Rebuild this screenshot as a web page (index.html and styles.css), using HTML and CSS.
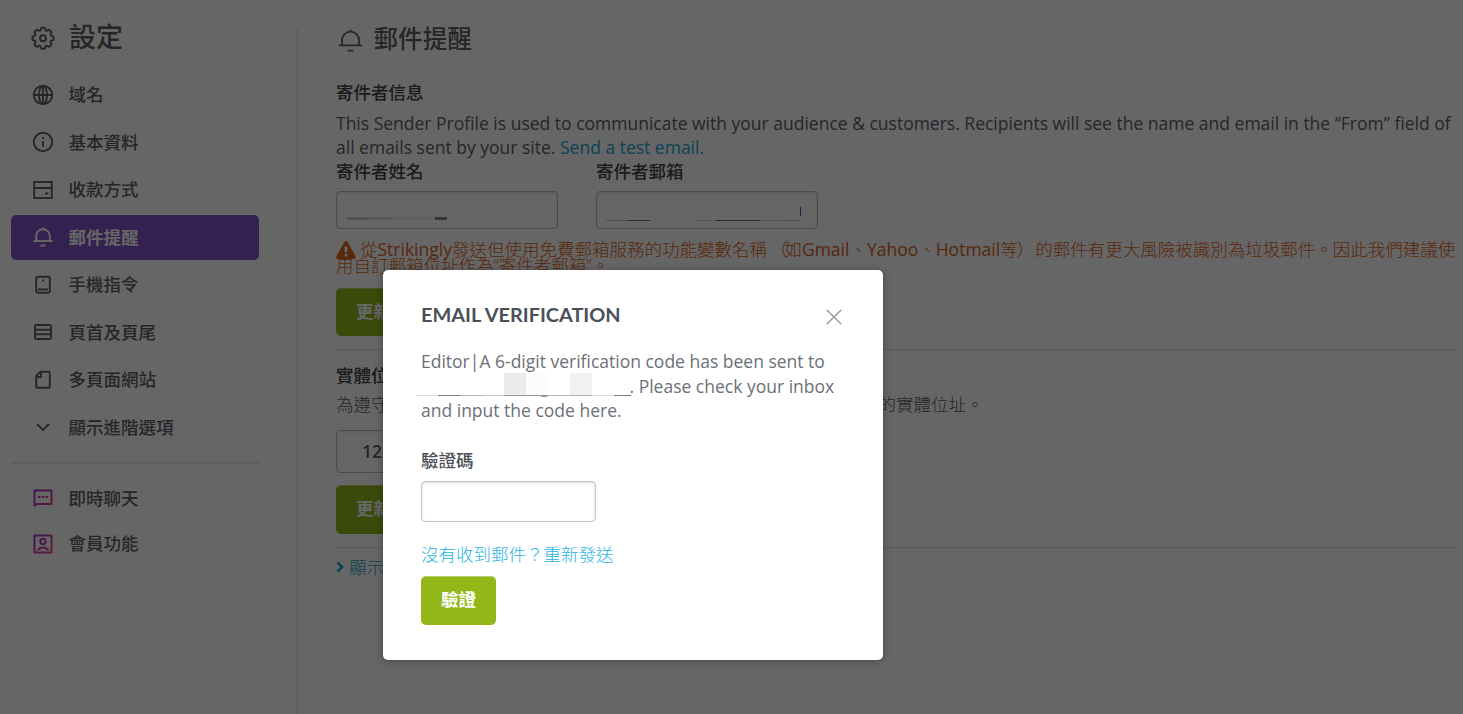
FILE: index.html
```
<!DOCTYPE html>
<html lang="zh-Hant">
<head>
    <meta charset="UTF-8">
    <meta name="viewport" content="width=device-width, initial-scale=1.0">
    <title>郵件提醒</title>
    <link rel="stylesheet" href="styles.css">
</head>
<body>
    <div class="page">
        <aside class="sidebar">
            <h1 class="sidebar-title">
                <svg class="icon icon-gear" viewBox="0 0 24 24"><path d="M10.300 1.800h3.400l.9 2.600 1.100.5 2.500-1.200 2.400 2.400-1.200 2.500.5 1.100 2.600.9v3.400l-2.600.9-.5 1.100 1.200 2.500-2.400 2.400-2.500-1.200-1.100.5-.9 2.600h-3.400l-.9-2.600-1.100-.5-2.500 1.200-2.400-2.400 1.200-2.500-.5-1.100-2.600-.9v-3.400l2.600-.9.500-1.100-1.200-2.500 2.400-2.400 2.500 1.200 1.100-.5z" stroke-linejoin="round"/><circle cx="12" cy="12.300" r="3"/></svg>
                <span>設定</span>
            </h1>
            <nav class="menu">
                <a class="menu-item">
                    <svg class="icon" viewBox="0 0 22 22"><circle cx="11" cy="11" r="9.2"/><ellipse cx="11" cy="11" rx="4" ry="9.2"/><path d="M2 11h18M11 2v18"/></svg>
                    <span>域名</span>
                </a>
                <a class="menu-item">
                    <svg class="icon" viewBox="0 0 22 22"><circle cx="11" cy="11" r="9.2"/><path d="M11 10v6M11 6v2"/></svg>
                    <span>基本資料</span>
                </a>
                <a class="menu-item">
                    <svg class="icon" viewBox="0 0 22 22"><rect x="2.2" y="3" width="17.6" height="16"/><path d="M2 9h18M13 14.5h3.5"/></svg>
                    <span>收款方式</span>
                </a>
                <a class="menu-item active">
                    <svg class="icon" viewBox="0 0 22 22"><path d="M1.500 15h19M4.200 15V10a6.800 6.800 0 0 1 13.600 0v5M11 1.500v2M8.500 19.500h5"/></svg>
                    <span>郵件提醒</span>
                </a>
                <a class="menu-item">
                    <svg class="icon" viewBox="0 0 22 22"><rect x="4.2" y="2.8" width="13.6" height="16" rx="1.5"/><path d="M6 15.500h10M10 6.500h2"/></svg>
                    <span>手機指令</span>
                </a>
                <a class="menu-item">
                    <svg class="icon" viewBox="0 0 22 22"><rect x="3" y="4" width="16" height="14" rx="1.5"/><path d="M3 8.700h16M3 13.300h16"/></svg>
                    <span>頁首及頁尾</span>
                </a>
                <a class="menu-item">
                    <svg class="icon" viewBox="0 0 22 22"><path d="M8.500 2.700h8a1.300 1.300 0 0 1 1.300 1.300v13.500a1.300 1.300 0 0 1-1.300 1.300h-11a1.300 1.300 0 0 1-1.300-1.300V7zM9 3v5H4.500"/></svg>
                    <span>多頁面網站</span>
                </a>
                <a class="menu-item">
                    <svg class="icon" viewBox="0 0 22 22"><path d="M5 8l6 6 6-6"/></svg>
                    <span>顯示進階選項</span>
                </a>
            </nav>
            <nav class="menu menu-extra">
                <a class="menu-item">
                    <svg class="icon icon-gradient" viewBox="0 0 22 22">
                        <defs>
                            <linearGradient id="pink" gradientUnits="userSpaceOnUse" x1="2" y1="2" x2="20" y2="20">
                                <stop offset="0" stop-color="#9a35d8"/>
                                <stop offset="1" stop-color="#ec3f78"/>
                            </linearGradient>
                        </defs>
                        <path d="M2.500 18.500V3.500h17v13.500H4.500L2.500 19.500M6 10h2.500M9.800 10h2.500M13.600 10h2.500"/>
                    </svg>
                    <span>即時聊天</span>
                </a>
                <a class="menu-item">
                    <svg class="icon icon-gradient" viewBox="0 0 22 22"><rect x="2.500" y="2.500" width="17" height="17"/><circle cx="11" cy="8.500" r="2.700"/><path d="M6.200 17.500v-1q2-2 4.800-2t4.800 2v1"/></svg>
                    <span>會員功能</span>
                </a>
            </nav>
        </aside>

        <main class="content">
            <h2 class="content-title">
                <svg class="icon icon-bell" viewBox="0 0 26 26"><path d="M1 18h24M4.200 18v-5.500a8.800 8.800 0 0 1 17.600 0V18M13 1.500v3M10 23.500h6"/></svg>
                <span>郵件提醒</span>
            </h2>

            <section class="sender">
                <h3 class="label">寄件者信息</h3>
                <p class="text">This Sender Profile is used to communicate with your audience &amp; customers. Recipients will see the name and email in the “From” field of<br>all emails sent by your site. <a class="link">Send a test email.</a></p>
                <div class="fields">
                    <div class="field">
                        <label class="label">寄件者姓名</label>
                        <div class="input">
                            <svg class="redacted" viewBox="0 0 220 36"><path fill="#c7d0d4" d="M10 25h22v3H10z"/><path fill="#dfd9d5" d="M32 25h22v3H32z"/><path fill="#f5f5f5" d="M54 25h44v3H54z"/><path fill="#82879a" d="M98 25h12v3H98z"/></svg>
                        </div>
                    </div>
                    <div class="field">
                        <label class="label">寄件者郵箱</label>
                        <div class="input">
                            <svg class="redacted" viewBox="0 0 220 36"><path fill="#c9c9bf" d="M9 28h22v1H9z"/><path fill="#707070" d="M31 28h22v1H31zM119 28h44v1h-44z"/><path fill="#dedede" d="M98 28h21v1H98zM163 28h22v1h-22z"/><path fill="#a8b8c8" d="M185 28h18v1h-18z"/><path fill="#315a9e" d="M203 15h1v9h-1z"/></svg>
                        </div>
                    </div>
                </div>
                <p class="warning"><svg class="icon-warning" viewBox="0 0 20 18"><path fill="currentColor" d="M8.300 1Q10-1 11.700 1l8 14.500Q20.500 18 18 18H2Q-.500 18 .300 15.500z"/><path fill="#fff" d="M8.500 5.500h3l-.4 6H8.900zM8.700 13h2.600v2.500H8.700z"/></svg>從<span class="latin">Strikingly</span>發送但使用免費郵箱服務的功能變數名稱<span class="paren">（</span>如<span class="latin">Gmail</span>、<span class="latin">Yahoo</span>、<span class="latin">Hotmail</span>等<span class="paren-end">）</span>的郵件有更大風險被識別為垃圾郵件。因此我們建議使<br>用自訂郵箱位址作為“寄件者郵箱”。</p>
                <button class="button">更新</button>
            </section>

            <section class="address">
                <h3 class="label">實體位址</h3>
                <p class="text light">為遵守反垃圾郵件法規的要求，您所發送的每封電子郵件都須包含公司的實體位址。</p>
                <div class="input address-input">12</div>
                <button class="button">更新</button>
            </section>

            <a class="link more"><svg class="icon-arrow" viewBox="0 0 8 12"><path d="M1.500 1.500L6 6l-4.500 4.500"/></svg>顯示更多</a>
        </main>
    </div>

    <div class="overlay"></div>

    <div class="modal">
        <div class="modal-header">
            <h2 class="modal-title">EMAIL VERIFICATION</h2>
            <svg class="icon-close" viewBox="0 0 16 16"><path d="M.7.7l14.600 14.600M15.300.7L.7 15.300"/></svg>
        </div>
        <p class="modal-text">Editor|A 6-digit verification code has been sent to<br><svg class="hidden-email" viewBox="0 0 215 25"><path fill="#ebebed" d="M88 0h22v22H88z"/><path fill="#fcfcfc" d="M110 0h22v22h-22z"/><path fill="#f0f2f1" d="M154 0h22v22h-22z"/><path fill="#dedede" d="M0 22h22v1H0zM176 22h22v1h-22z"/><path fill="#777980" d="M22 22h22v1H22zM198 22h17v1h-17z"/><path fill="#b5b5b8" d="M44 22h22v1H44zM132 22h44v1h-44z"/><path fill="#c8c8cb" d="M66 22h22v1H66z"/><path fill="#96979c" d="M88 22h44v1H88zM125 23h6v1h-6z"/></svg>. Please check your inbox<br>and input the code here.</p>
        <label class="modal-label">驗證碼</label>
        <input class="code-input" type="text">
        <a class="resend">沒有收到郵件？重新發送</a>
        <button class="button verify">驗證</button>
    </div>
</body>
</html>
```
FILE: styles.css
```
* {
    box-sizing: border-box;
}
body {
    margin: 0;
    height: 714px;
    overflow: hidden;
    background-color: #fff;
    color: #5c6068;
    font-family: "Open Sans", "Noto Sans CJK TC", sans-serif;
    font-size: 17.5px;
    line-height: 24.5px;
}
h1, h2, h3, p {
    margin: 0;
}
.page {
    display: flex;
    height: 714px;
}
.icon {
    width: 22px;
    height: 22px;
    flex: none;
    fill: none;
    stroke: currentColor;
    stroke-width: 1.9;
}
.icon-gradient {
    stroke: url(#pink);
}

/* sidebar */
.sidebar {
    width: 298px;
    flex: none;
    margin-top: 28px;
    padding-left: 11px;
    border-right: 1px solid #dcdcdc;
}
.sidebar-title {
    display: flex;
    align-items: center;
    height: 20px;
    margin-bottom: 24px;
    padding-left: 20.4px;
    font-size: 27px;
    font-weight: 500;
}
.sidebar-title span {
    margin: -2px 0 0 13.6px;
}
.icon-gear {
    width: 24px;
    height: 24px;
}
.menu {
    display: flex;
    flex-direction: column;
    gap: 2.5px;
    width: 248px;
}
.menu-item {
    display: flex;
    align-items: center;
    gap: 14.6px;
    height: 45px;
    padding-left: 21.4px;
    border-radius: 5px;
    font-weight: 500;
}
.menu-item span {
    margin-left: -0.5px;
}
.menu-item.active {
    background-color: #8553c6;
    color: #fff;
    font-weight: 700;
}
.menu-extra {
    width: 249px;
    gap: 0.5px;
    margin-top: 12px;
    padding-top: 12px;
    border-top: 2px solid #ececec;
}

/* content */
.content {
    flex: 1;
    min-width: 0;
    padding: 24px 4px 0 38px;
    white-space: nowrap;
}
.content-title {
    display: flex;
    align-items: center;
    gap: 10.5px;
    height: 30px;
    margin-bottom: 26px;
    padding-left: 2px;
    font-size: 24.6px;
    font-weight: 500;
}
.icon-bell {
    width: 25px;
    height: 25px;
    margin-top: 2px;
}
.label {
    display: block;
    height: 24px;
    font-size: 17.5px;
    font-weight: 500;
    color: #40444a;
}
.sender .text {
    margin-top: 7px;
    line-height: 24px;
}
.link {
    color: #25a5d5;
}
.fields {
    display: flex;
    gap: 38px;
}
.field {
    width: 222px;
}
.input {
    height: 38px;
    margin-top: 8px;
    border: 1px solid #bbb;
    border-radius: 4px;
    box-shadow: inset 0 1px 3px rgba(0, 0, 0, 0.12);
}
.redacted {
    display: block;
    width: 220px;
    height: 36px;
}
.warning {
    height: 34px;
    margin-top: 12px;
    line-height: 16px;
    font-weight: 300;
    color: #e0641a;
}
.latin {
    font-weight: 400;
    color: #d8621c;
}
.paren {
    margin: 0 -3px 0 3px;
}
.paren-end {
    margin: 0 1px 0 -1px;
}
.icon-warning {
    width: 20px;
    height: 18px;
    margin: -4px 4px -4px 0;
    vertical-align: 1px;
}
.button {
    display: block;
    width: 75px;
    height: 49px;
    padding: 0 0 4px;
    border: 0;
    border-radius: 5px;
    background-color: #93b719;
    box-shadow: inset 0 2px 0 -1px rgba(255, 255, 255, 0.35);
    color: #fff;
    font-family: inherit;
    font-size: 17.5px;
    font-weight: 700;
}
.sender .button {
    height: 48px;
    margin-top: 13px;
}
.address {
    margin-top: 13px;
    padding: 13px 0 13px;
    border-top: 1px solid #e0e0e0;
    border-bottom: 1px solid #e0e0e0;
}
.light {
    margin-top: 5px;
    font-weight: 300;
}
.address-input {
    width: 260px;
    height: 43px;
    margin: 13px 0 12px;
    padding: 8px 25px;
    font-weight: 600;
}
.more {
    display: flex;
    align-items: center;
    gap: 5px;
    margin-top: 7px;
    font-weight: 300;
}
.icon-arrow {
    width: 8px;
    height: 12px;
    fill: none;
    stroke: currentColor;
    stroke-width: 2.6;
}

/* modal */
.overlay {
    position: absolute;
    top: 0;
    left: 0;
    width: 100%;
    height: 100%;
    background-color: rgba(0, 0, 0, 0.6);
}
.modal {
    position: absolute;
    top: 270px;
    left: 383px;
    width: 500px;
    height: 390px;
    padding: 30px 38px;
    border-radius: 5px;
    background-color: #fff;
    box-shadow: 0 1px 8px rgba(0, 0, 0, 0.3);
    white-space: nowrap;
}
.modal-header {
    display: flex;
    justify-content: space-between;
    height: 49px;
}
.modal-title {
    height: 28px;
    font-family: Lato, sans-serif;
    font-size: 19.9px;
    font-weight: 700;
    line-height: 28px;
    color: #4b5058;
}
.icon-close {
    width: 16px;
    height: 16px;
    margin: 9px 3px 0 0;
    fill: none;
    stroke: #999;
    stroke-width: 1.4;
}
.modal-text {
    height: 74px;
    color: #6c7078;
}
.hidden-email {
    width: 215px;
    height: 25px;
    margin: -10px -1.5px -10px -5px;
    vertical-align: 5px;
}
.modal-label {
    display: block;
    margin-top: 25px;
    font-weight: 500;
    color: #4b5058;
}
.code-input {
    display: block;
    width: 175px;
    height: 41px;
    margin-top: 8px;
    border: 1px solid #c3c3c8;
    border-radius: 4px;
    box-shadow: inset 0 1px 3px rgba(0, 0, 0, 0.15);
}
.resend {
    display: block;
    margin-top: 20px;
    font-weight: 300;
    color: #25b4e6;
}
.verify {
    margin-top: 10px;
}
```
